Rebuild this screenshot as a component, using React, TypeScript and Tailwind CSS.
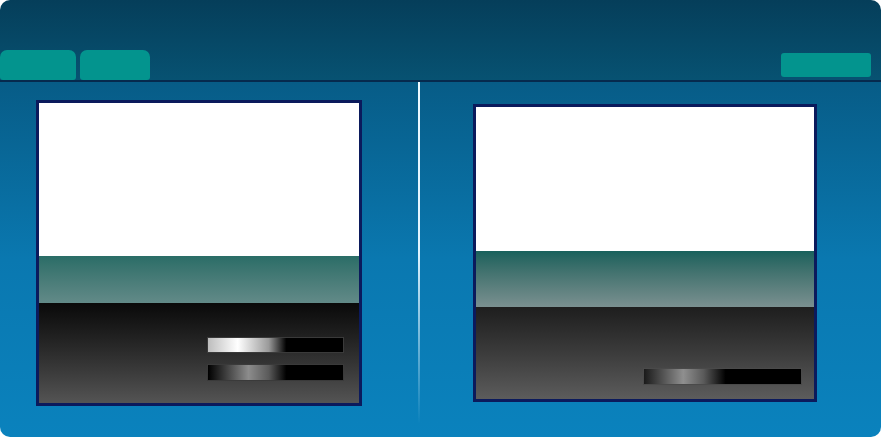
import React from 'react';

function ScreenPanel({ variant }: { variant: 'left' | 'right' }) {
  const isLeft = variant === 'left';
  return (
    <div
      className={`flex flex-col border-[3px] border-[#0b1a5c] ${
        isLeft ? 'w-[326px] h-[306px]' : 'w-[344px] h-[298px]'
      }`}
    >
      {/* white canvas */}
      <div className={`bg-white ${isLeft ? 'h-[153px]' : 'h-[144px]'}`} />
      {/* teal band */}
      <div
        className={`bg-gradient-to-b ${
          isLeft ? 'h-[47px] from-[#2a6d67] to-[#628a88]' : 'h-[56px] from-[#17615c] to-[#7a9090]'
        }`}
      />
      {/* dark area */}
      <div
        className={`flex-1 flex flex-col items-end bg-gradient-to-b ${
          isLeft ? 'from-[#0a0a0a] to-[#545454] pt-[34px] pr-[15px] gap-[11px]' : 'from-[#1e1e1e] to-[#5c5c5c] pt-[61px] pr-[12px]'
        }`}
      >
        {isLeft ? (
          <>
            <div className="w-[137px] h-[16px] border border-[#3a3a3a] bg-[linear-gradient(to_right,#bdbdbd_0%,#ffffff_22%,#9a9a9a_45%,#000000_58%,#000000_100%)]" />
            <div className="w-[137px] h-[17px] border border-[#3a3a3a] bg-[linear-gradient(to_right,#000000_0%,#8c8c8c_30%,#5a5a5a_45%,#000000_58%,#000000_100%)]" />
          </>
        ) : (
          <div className="w-[159px] h-[17px] border border-[#4a4a4a] bg-[linear-gradient(to_right,#1a1a1a_0%,#8f8f8f_25%,#5a5a5a_38%,#000000_52%,#000000_100%)]" />
        )}
      </div>
    </div>
  );
}

export default function App() {
  return (
    <div className="w-[881px] h-[437px] bg-white">
      <div className="w-full h-full rounded-[10px] overflow-hidden flex flex-col">
        {/* Header */}
        <div className="h-[82px] flex items-end justify-between border-b-2 border-[#062a4e] bg-gradient-to-b from-[#053e5a] to-[#075272]">
          <div className="flex gap-[4px]">
            <div className="w-[76px] h-[30px] bg-[#03948e] rounded-t-[7px] rounded-b-[3px]" />
            <div className="w-[70px] h-[30px] bg-[#03948e] rounded-t-[7px] rounded-b-[3px]" />
          </div>
          <div className="w-[90px] h-[24px] bg-[#03948e] rounded-[3px] mr-[10px] mb-[3px]" />
        </div>

        {/* Main */}
        <div className="flex-1 flex bg-gradient-to-b from-[#075c87] via-[#0a78b0] to-[#0a82bd]">
          <div className="w-[418px] pl-[36px] pt-[18px]">
            <ScreenPanel variant="left" />
          </div>
          <div className="w-[2px] h-[342px] bg-gradient-to-b from-[#eef9ff] via-[#e0f4ff] to-transparent" />
          <div className="pl-[53px] pt-[22px]">
            <ScreenPanel variant="right" />
          </div>
        </div>
      </div>
    </div>
  );
}
